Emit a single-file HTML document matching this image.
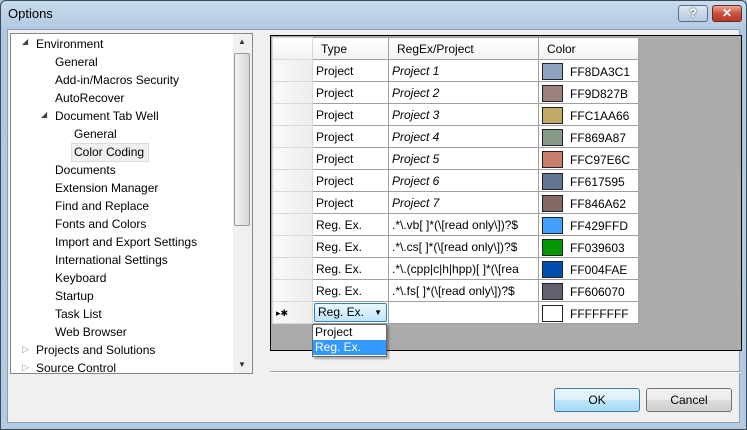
<!DOCTYPE html>
<html><head><style>
*{margin:0;padding:0;box-sizing:border-box}
body{width:747px;height:430px;overflow:hidden;font-family:"Liberation Sans",sans-serif;font-size:12px;background:#a9c3dd;position:relative;color:#000}
.abs{position:absolute}
#frame{left:0;top:0;width:747px;height:430px;border:1px solid #3b4b5c;border-radius:6px 6px 0 0;background:linear-gradient(#c9dbee,#b0c8e0 30px,#b4cbe2)}
#title{left:8px;top:6px;font-size:13px;color:#000}
#client{left:7px;top:29px;width:733px;height:394px;background:#f0f0f0;border:1px solid #8aa0b8}
.tree{left:10px;top:33px;width:243px;height:341px;background:#fff;border:1px solid #828790}
.ti{position:absolute;white-space:nowrap;font-size:12px}
.sb{left:233px;top:34px;width:19px;height:339px;background:#f0f0f0}
#grid{left:270px;top:35px;width:472px;height:316px;background:#ababab;border:1px solid #000}
table{position:absolute;left:1px;top:1px;border-collapse:collapse}
td{height:22px;border:1px solid #a0a0a0;padding:0 3px;font-size:12px;background:#fff;white-space:nowrap;overflow:hidden;vertical-align:middle;line-height:14px}
td.rh{background:linear-gradient(90deg,#fafafa,#ececec);width:40px;border-color:#d8d8d8}
tr.h td{background:linear-gradient(#fff,#f2f2f2);height:22px;padding-left:8px}
.sw{display:inline-block;width:21px;height:17px;border:1px solid #222;vertical-align:middle;margin-right:7px;position:relative;top:1px}
.t{position:relative;top:2px}
.btn{height:24px;border:1px solid #707070;border-radius:3px;background:linear-gradient(#f2f2f2,#ebebeb 50%,#dddddd 51%,#cfcfcf);text-align:center;line-height:22px;font-size:12px}
</style></head><body>
<div id="frame" class="abs"></div>
<div id="title" class="abs">Options</div>
<div class="abs" style="left:678px;top:5px;width:30px;height:17px;border:1px solid #5a6c80;border-radius:3px;background:linear-gradient(#dce8f4,#b5c9de);text-align:center;font-size:12px;font-weight:bold;color:#fff;text-shadow:0 0 2px #333;line-height:15px">?</div>
<div class="abs" style="left:712px;top:5px;width:30px;height:17px;border:1px solid #6a2a20;border-radius:3px;background:linear-gradient(#e8a89a,#c7503c 50%,#b83a26);text-align:center;font-size:12px;font-weight:bold;color:#fff;line-height:15px">✕</div>
<div id="client" class="abs"></div>

<div class="tree abs">
<div class="ti" style="left:11px;top:3px;font-size:8px;color:#444">◢</div><div class="ti" style="left:25px;top:3px">Environment</div>
<div class="ti" style="left:44px;top:21px">General</div>
<div class="ti" style="left:44px;top:39px">Add-in/Macros Security</div>
<div class="ti" style="left:44px;top:57px">AutoRecover</div>
<div class="ti" style="left:30px;top:76px;font-size:8px;color:#444">◢</div><div class="ti" style="left:44px;top:75px">Document Tab Well</div>
<div class="ti" style="left:63px;top:93px">General</div>
<div class="ti" style="left:60px;top:109px;width:78px;height:19px;background:#f0f0f0;border:1px solid #dadada"></div>
<div class="ti" style="left:63px;top:111px">Color Coding</div>
<div class="ti" style="left:44px;top:129px">Documents</div>
<div class="ti" style="left:44px;top:147px">Extension Manager</div>
<div class="ti" style="left:44px;top:165px">Find and Replace</div>
<div class="ti" style="left:44px;top:183px">Fonts and Colors</div>
<div class="ti" style="left:44px;top:201px">Import and Export Settings</div>
<div class="ti" style="left:44px;top:219px">International Settings</div>
<div class="ti" style="left:44px;top:237px">Keyboard</div>
<div class="ti" style="left:44px;top:255px">Startup</div>
<div class="ti" style="left:44px;top:273px">Task List</div>
<div class="ti" style="left:44px;top:291px">Web Browser</div>
<div class="ti" style="left:11px;top:310px;font-size:9px;color:#999">▷</div><div class="ti" style="left:25px;top:309px">Projects and Solutions</div>
<div class="ti" style="left:11px;top:328px;font-size:9px;color:#999">▷</div><div class="ti" style="left:25px;top:327px">Source Control</div>
</div>
<div class="sb abs"><div class="abs" style="left:5px;top:3px;font-size:8px;color:#333">▲</div><div class="abs" style="left:1px;top:19px;width:16px;height:173px;border:1px solid #999;border-radius:2px;background:linear-gradient(90deg,#f2f2f2,#d8d8d8)"></div><div class="abs" style="left:5px;top:326px;font-size:8px;color:#333">▼</div></div>

<div id="grid" class="abs">
<table>
<tr class="h"><td class="rh" style="width:40px"></td><td style="width:76px">Type</td><td style="width:150px">RegEx/Project</td><td style="width:100px">Color</td></tr>
<tr><td class="rh"></td><td>Project</td><td><i>Project 1</i></td><td><span class="sw" style="background:#8DA3C1"></span><span class="t">FF8DA3C1</span></td></tr>
<tr><td class="rh"></td><td>Project</td><td><i>Project 2</i></td><td><span class="sw" style="background:#9D827B"></span><span class="t">FF9D827B</span></td></tr>
<tr><td class="rh"></td><td>Project</td><td><i>Project 3</i></td><td><span class="sw" style="background:#C1AA66"></span><span class="t">FFC1AA66</span></td></tr>
<tr><td class="rh"></td><td>Project</td><td><i>Project 4</i></td><td><span class="sw" style="background:#869A87"></span><span class="t">FF869A87</span></td></tr>
<tr><td class="rh"></td><td>Project</td><td><i>Project 5</i></td><td><span class="sw" style="background:#C97E6C"></span><span class="t">FFC97E6C</span></td></tr>
<tr><td class="rh"></td><td>Project</td><td><i>Project 6</i></td><td><span class="sw" style="background:#617595"></span><span class="t">FF617595</span></td></tr>
<tr><td class="rh"></td><td>Project</td><td><i>Project 7</i></td><td><span class="sw" style="background:#846A62"></span><span class="t">FF846A62</span></td></tr>
<tr><td class="rh"></td><td>Reg. Ex.</td><td>.*\.vb[ ]*(\[read only\])?$</td><td><span class="sw" style="background:#429FFD"></span><span class="t">FF429FFD</span></td></tr>
<tr><td class="rh"></td><td>Reg. Ex.</td><td>.*\.cs[ ]*(\[read only\])?$</td><td><span class="sw" style="background:#039603"></span><span class="t">FF039603</span></td></tr>
<tr><td class="rh"></td><td>Reg. Ex.</td><td style="max-width:150px">.*\.(cpp|c|h|hpp)[ ]*(\[rea</td><td><span class="sw" style="background:#004FAE"></span><span class="t">FF004FAE</span></td></tr>
<tr><td class="rh"></td><td>Reg. Ex.</td><td>.*\.fs[ ]*(\[read only\])?$</td><td><span class="sw" style="background:#606070"></span><span class="t">FF606070</span></td></tr>
<tr><td class="rh" style="font-size:9px">▸✱</td><td style="padding:1px"><div style="height:19px;border:1px solid #3c7fb1;border-radius:2px;background:linear-gradient(#eaf6fd,#bee6fd);padding-left:3px;line-height:17px">Reg. Ex.<span style="float:right;font-size:8px;margin-right:4px">▼</span></div></td><td></td><td><span class="sw" style="background:#fff"></span><span class="t">FFFFFFFF</span></td></tr>
</table>
</div>
<div class="abs" style="left:312px;top:324px;width:75px;height:33px;background:#fff;border:1px solid #646464;box-shadow:2px 2px 2px rgba(0,0,0,.3)">
<div style="padding-left:2px;height:15px;line-height:15px">Project</div>
<div style="padding-left:2px;height:15px;line-height:15px;background:#3399ff;color:#fff">Reg. Ex.</div>
</div>
<div class="abs" style="left:270px;top:371px;width:471px;height:2px;border-top:1px solid #a0a0a0;border-bottom:1px solid #fff"></div>
<div class="btn abs" style="left:554px;top:388px;width:86px;border-color:#3c7fb1;background:linear-gradient(#eaf6fd,#d9f0fc 50%,#bee6fd 51%,#a7d9f5)">OK</div>
<div class="btn abs" style="left:646px;top:388px;width:86px">Cancel</div>
</body></html>
